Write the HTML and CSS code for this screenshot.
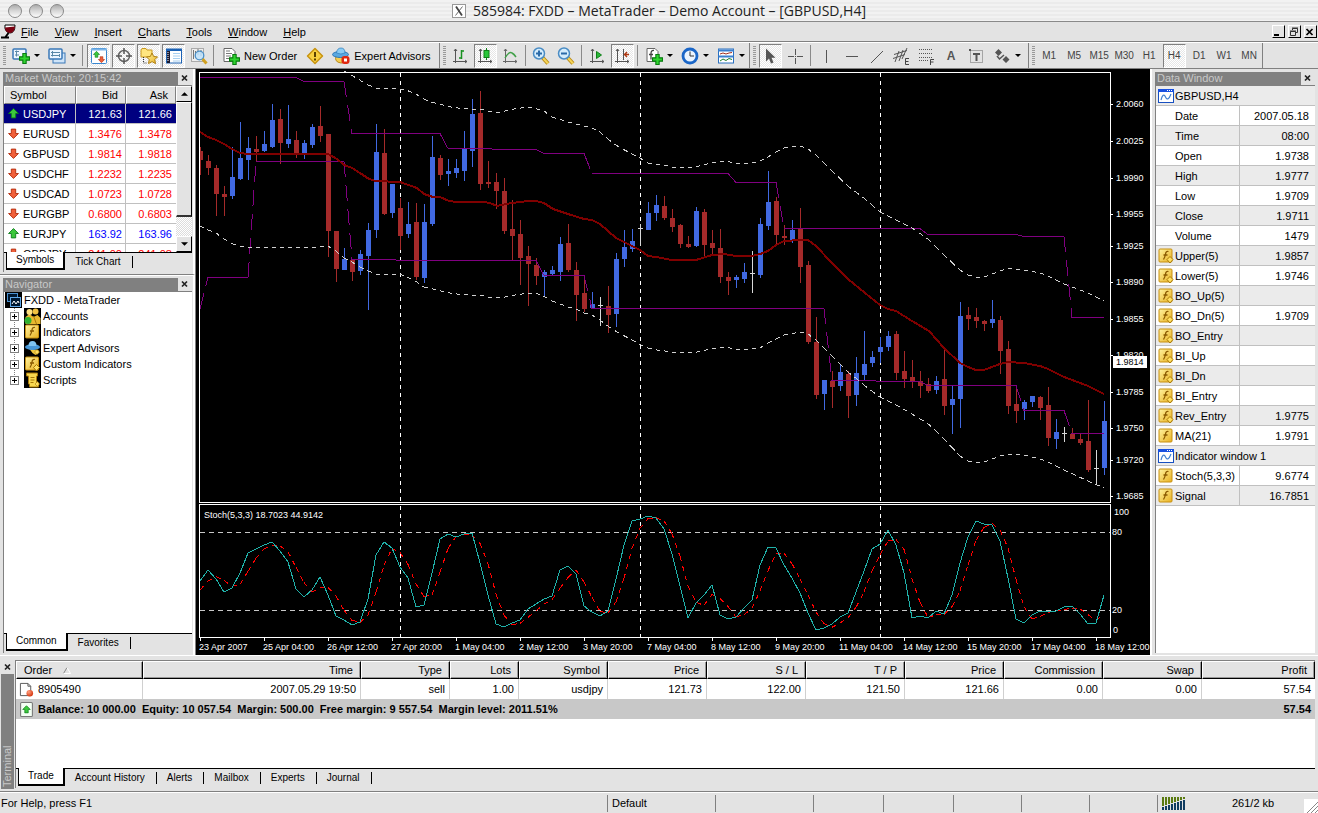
FILE: index.html
```html
<!DOCTYPE html>
<html lang="en">
<head>
<meta charset="utf-8">
<title>585984: FXDD – MetaTrader – Demo Account – [GBPUSD,H4]</title>
<link rel="stylesheet" href="styles.css">
</head>
<body>
<svg class="defs" aria-hidden="true">
  <defs>
    <linearGradient id="gold" x1="0" y1="0" x2="1" y2="1"><stop offset="0" stop-color="#fff3a0"/><stop offset="1" stop-color="#e8b020"/></linearGradient>
    <linearGradient id="knob" x1="0" y1="0" x2="0" y2="1"><stop offset="0" stop-color="#a8a8a8"/><stop offset=".5" stop-color="#d8d8d8"/><stop offset="1" stop-color="#fff"/></linearGradient>
    <radialGradient id="redball" cx=".35" cy=".3" r=".8"><stop offset="0" stop-color="#ffa080"/><stop offset="1" stop-color="#d02800"/></radialGradient>
  </defs>
  <symbol id="plus" viewBox="0 0 10 10"><path d="M3.500 .5h3v3h3v3h-3v3h-3v-3h-3v-3h3z" fill="#2fd52f" stroke="#087a10"/></symbol>
  <symbol id="up" viewBox="0 0 10 10"><path d="M5 .5L9.500 5H7v4H3V5H.5z" fill="#3cc83c" stroke="#0a7a1a" stroke-width=".8"/></symbol>
  <symbol id="down" viewBox="0 0 10 10"><path d="M5 9.500L.5 5H3V1h4v4h2.500z" fill="#f0603a" stroke="#b02808" stroke-width=".8"/></symbol>
  <symbol id="newchart" viewBox="0 0 18 18"><rect x="1" y="2" width="13" height="10" rx="1" fill="#eef6ff" stroke="#3a78b8" stroke-width="1.500"/><path d="M3 4.500h4M4.500 3.500v6M3 8h4" stroke="#5a88a8" fill="none"/><use href="#plus" x="7" y="6" width="11" height="11"/></symbol>
  <symbol id="profiles" viewBox="0 0 18 18"><rect x="5" y="6" width="12" height="10" fill="#cfe4f8" stroke="#3a78b8"/><rect x="1" y="2" width="13" height="10" rx="1" fill="#eef6ff" stroke="#3a78b8" stroke-width="1.500"/><path d="M3 5.500h9M4.500 4v5.500M3 8.500h8M11.500 7v3" stroke="#5a88a8" fill="none"/></symbol>
  <symbol id="market" viewBox="0 0 18 18"><rect x="1.500" y="1.500" width="15" height="15" rx="1" fill="#fff" stroke="#3a88d0"/><path d="M1 2.500h16" stroke="#7ab4e8" stroke-width="2"/><use href="#up" x="3" y="4" width="7" height="7"/><use href="#down" x="8" y="9" width="7" height="7"/></symbol>
  <symbol id="target" viewBox="0 0 18 18"><circle cx="9" cy="9" r="5.500" fill="none" stroke="#666" stroke-width="1.500"/><path d="M9 1v6M9 11v6M1 9h6M11 9h6" stroke="#555" stroke-width="1.500"/></symbol>
  <symbol id="folderstar" viewBox="0 0 18 18"><path d="M1 3l1-1.500h4L7 3h5v7H1z" fill="#ffe680" stroke="#c89820"/><path d="M3.500 10v6h4" stroke="#333" stroke-dasharray="1 1" fill="none"/><path d="M12 6l1.700 3.500 3.800.4-2.700 2.700.7 4-3.500-2-3.500 2 .7-4L6.500 9.900l3.800-.4z" fill="url(#gold)" stroke="#b08010"/></symbol>
  <symbol id="terminalicon" viewBox="0 0 18 18"><rect x="1.500" y="2" width="15" height="14" fill="#fff" stroke="#1c62b4"/><path d="M1 3h16" stroke="#1c62b4" stroke-width="2"/><path d="M3.500 4v12" stroke="#1a1a30" stroke-width="3"/><path d="M8 6.500h7M8 9h7M8 11.500h7M8 14h7" stroke="#a8d0f0"/><path d="M3 5v10" stroke="#fff" stroke-dasharray="1 1"/></symbol>
  <symbol id="tester" viewBox="0 0 18 18"><rect x="1.500" y="1.500" width="12" height="13" fill="#eee" stroke="#aaa"/><path d="M3.500 3v9M5.500 4v6M8 2v6M11 3v6" stroke="#777"/><circle cx="9.500" cy="8.500" r="4.300" fill="#bfe2fa" fill-opacity=".85" stroke="#4a90c8" stroke-width="1.300"/><path d="M12.500 12l4 4.500" stroke="#d0a020" stroke-width="3"/></symbol>
  <symbol id="neworder" viewBox="0 0 18 18"><path d="M2 1.500h8l3 3v10H2z" fill="#fff" stroke="#666"/><path d="M4 4h4M4 6.500h6M4 9h5M4 11.500h3" stroke="#777"/><use href="#plus" x="7" y="7" width="11" height="11"/></symbol>
  <symbol id="warn" viewBox="0 0 18 18"><path d="M9 1.500L16.500 9 9 16.500 1.500 9z" fill="#f8d040" stroke="#c89410" stroke-width="1.500" stroke-linejoin="round"/><path d="M9 5v5M9 11.500v2" stroke="#5a4000" stroke-width="2"/></symbol>
  <symbol id="expert" viewBox="0 0 18 18"><path d="M4 9q-2 6 5 7 5 0 6-6z" fill="#f4cc50" stroke="#b88a18"/><ellipse cx="8.500" cy="7.500" rx="8" ry="3" fill="#5aa8e0" stroke="#2a78b8"/><path d="M4.500 6Q5 1 9 1t4 5q-4 2-8.500 0z" fill="#8accf4" stroke="#2a78b8" stroke-width=".7"/><rect x="9.500" y="9" width="8" height="8" rx="3" fill="#e02810"/><rect x="12" y="11.500" width="3" height="3" fill="#fff"/></symbol>
  <symbol id="bars" viewBox="0 0 18 18"><path d="M4.500 2v14M2 14.500h14M3 4l1.500-2L6 4M14 13l2 1.500-2 1.500" stroke="#555" fill="none"/><path d="M10.500 3v9M10.500 4h2.500M8 11h2.500" stroke="#189020" stroke-width="1.500"/></symbol>
  <symbol id="candles" viewBox="0 0 18 18"><path d="M4.500 2v14M2 14.500h14M3 4l1.500-2L6 4M14 13l2 1.500-2 1.500" stroke="#555" fill="none"/><path d="M10.500 1v12" stroke="#108018"/><rect x="8" y="3.500" width="5" height="7" fill="#28c838" stroke="#108018"/></symbol>
  <symbol id="linechart" viewBox="0 0 18 18"><path d="M4.500 2v14M2 14.500h14M3 4l1.500-2L6 4M14 13l2 1.500-2 1.500" stroke="#666" fill="none"/><path d="M4 11q4-7 7-5 2 1 4 4" stroke="#40a048" stroke-width="1.500" fill="none"/></symbol>
  <symbol id="lens" viewBox="0 0 18 18"><path d="M10.500 10.500l5.500 6" stroke="#b88a18" stroke-width="4"/><path d="M11 11l5 5.500" stroke="#f4d458" stroke-width="2"/><circle cx="7" cy="6.500" r="5.500" fill="#d4ecfc" stroke="#4a8cc4" stroke-width="1.500"/></symbol>
  <symbol id="zoomin" viewBox="0 0 18 18"><use href="#lens"/><path d="M4 6.500h6M7 3.500v6" stroke="#2a6aa8" stroke-width="2"/></symbol>
  <symbol id="zoomout" viewBox="0 0 18 18"><use href="#lens"/><path d="M4 6.500h6" stroke="#2a6aa8" stroke-width="2"/></symbol>
  <symbol id="autoscroll" viewBox="0 0 18 18"><path d="M4.500 2v14M2 14.500h14M3 4l1.500-2L6 4M14 13l2 1.500-2 1.500" stroke="#555" fill="none"/><path d="M8.500 4.500v7l5-3.500z" fill="#28b838" stroke="#108018"/></symbol>
  <symbol id="shift" viewBox="0 0 18 18"><path d="M4.500 2v14M2 14.500h14M3 4l1.500-2L6 4M14 13l2 1.500-2 1.500M10.500 2v11" stroke="#555" fill="none"/><path d="M16 7.500h-4M14 5l-2.500 2.500L14 10" stroke="#b03810" stroke-width="1.300" fill="none"/></symbol>
  <symbol id="indicator" viewBox="0 0 18 18"><path d="M2 1.500h8l3 3v10H2z" fill="#fff" stroke="#666"/><path d="M9 3.500q-3-.5-3 3v6M4 7.500h4" stroke="#444" fill="none" stroke-width="1.300"/><use href="#plus" x="7" y="7" width="11" height="11"/></symbol>
  <symbol id="clock" viewBox="0 0 18 18"><circle cx="9" cy="9" r="7" fill="#eaf4ff" stroke="#1a66c8" stroke-width="2.800"/><path d="M9 4.500V9h4" stroke="#333" fill="none"/></symbol>
  <symbol id="template" viewBox="0 0 18 18"><rect x="1.500" y="2" width="15" height="14" fill="#fff" stroke="#2a70c0"/><path d="M1 3.500h16M1.500 9.500h15" stroke="#3a80d0" stroke-width="2"/><path d="M3 7l3-1 3 1 3-1 3-.5" stroke="#a03020" fill="none"/><path d="M3 14l3-2 3 1.500 3-2 3 1" stroke="#208030" fill="none"/></symbol>
  <symbol id="cursor" viewBox="0 0 18 18"><path d="M5 1.500v13l3-3 2 5 2.500-1-2-4.700h4z" fill="#555"/></symbol>
  <symbol id="cross" viewBox="0 0 18 18"><path d="M9.500 2v6M9.500 11v6M2 9.500h6M11 9.500h6" stroke="#555"/><path d="M9.500 9v1" stroke="#555"/></symbol>
  <symbol id="vline" viewBox="0 0 18 18"><path d="M9.500 3v13" stroke="#555"/></symbol>
  <symbol id="hline" viewBox="0 0 18 18"><path d="M4 9.500h12" stroke="#555"/></symbol>
  <symbol id="trend" viewBox="0 0 18 18"><path d="M4 16L16 4" stroke="#555"/></symbol>
  <symbol id="channel" viewBox="0 0 18 18"><path d="M2 7.500l13-4M1 11.500l12-4M3 15l4-11M7 14l4-11M10 12l5-11" stroke="#555" fill="none"/><path d="M17 11.500h-3.500v6H17M13.500 14.500h3" stroke="#444" fill="none"/></symbol>
  <symbol id="fibo" viewBox="0 0 18 18"><path d="M2 2.500h14M2 6.500h14M2 10.500h14M2 13.500h9" stroke="#555" stroke-dasharray="1 1"/><path d="M17 12.500h-3.500V18M13.500 15h3" stroke="#444" fill="none"/></symbol>
  <symbol id="labelbox" viewBox="0 0 18 18"><rect x="3.500" y="3.500" width="12" height="12" fill="none" stroke="#666" stroke-dasharray="1 1"/><path d="M6 7h7M9.500 7v7" stroke="#555" stroke-width="2" fill="none"/><path d="M2 2h2v2H2z" fill="#555"/></symbol>
  <symbol id="arrows" viewBox="0 0 18 18"><path d="M2 5.500L5.500 2 9 5.500 5.500 9zM9.500 12.500L13 9l3.500 3.500L13 16z" fill="#555"/><path d="M4 9l2.500 3L11 8" stroke="#555" stroke-width="1.500" fill="none"/></symbol>
  <symbol id="glass" viewBox="0 0 16 18"><path d="M5 2h10q0 8-5 8Q4 9 5 2z" fill="#fff" stroke="#000"/><path d="M5 4.500l10-1q-.5 6.500-5 6.500-5-.5-5-5.500z" fill="#7c0010"/><path d="M8.500 10L5.500 14M1 14.500h8" stroke="#000" stroke-width="2"/></symbol>
  <symbol id="ind" viewBox="0 0 16 16"><rect x="1" y="1" width="13" height="13" rx="1" fill="url(#gold)" stroke="#c89010"/><path d="M10.500 3.500q-2.500-.8-3 2.500t-2 5.500M5.500 7h4" stroke="#8a5a00" stroke-width="1.300" fill="none"/></symbol>
  <symbol id="cind" viewBox="0 0 16 16"><use href="#ind"/><path d="M12 8.500l3 3-3 3.500-3-3.500z" fill="#ffe060" stroke="#a87808"/></symbol>
  <symbol id="win" viewBox="0 0 16 14"><rect x=".5" y=".5" width="15" height="13" fill="#fff" stroke="#1850c0"/><path d="M0 1.500h16" stroke="#1850e0" stroke-width="3"/><path d="M9 1.500h1M11 1.500h1M13 1.500h1" stroke="#fff"/><path d="M3 11Q5 3 7.500 8T13 5" stroke="#4080d0" fill="none" stroke-width="1.200"/></symbol>
  <symbol id="box" viewBox="0 0 9 9"><rect x=".5" y=".5" width="8" height="8" fill="#fff" stroke="#808080"/><path d="M2 4.500h5M4.500 2v5" stroke="#000"/></symbol>
  <symbol id="people" viewBox="0 0 16 16"><path d="M1 16V9l4-3 4 3 4-2 3 3v6z" fill="#e8b830"/><circle cx="5" cy="4" r="3" fill="#ffe080"/><circle cx="11" cy="3.500" r="3" fill="#f0c040"/><circle cx="3.500" cy="12.500" r="3.500" fill="#30b030"/><path d="M9 8l3 8" stroke="#a87808"/></symbol>
  <symbol id="hat" viewBox="0 0 16 16"><path d="M5 9l9 1v3l-3 2-3-2z" fill="#f0c840"/><ellipse cx="8" cy="7" rx="7.500" ry="3" fill="#4898d8"/><path d="M4 6q0-5 4-5t4 5z" fill="#80c4f0"/><path d="M12.500 9.500L15 12l-2.500 2.500L10 12z" fill="#ffe060" stroke="#a87808" stroke-width=".6"/></symbol>
  <symbol id="scroll" viewBox="0 0 16 16"><path d="M2 1h11v3h-1v8h2v3H5v-3H4V4H2z" fill="#f8d850" stroke="#a87808"/><path d="M6 5.500h4M6 8h4M6 10.500h3" stroke="#a87808"/><path d="M13 9.500l2 2.500-2 2.500-2.500-2.500z" fill="#ffe060" stroke="#a87808" stroke-width=".6"/></symbol>
  <symbol id="root" viewBox="0 0 17 16"><path d="M0 0h17v16H0z" fill="#000"/><rect x="2.500" y="1.500" width="10" height="8" fill="#001830" stroke="#4a90d0"/><rect x="5.500" y="5.500" width="10" height="9" fill="#001830" stroke="#60a8e8"/><path d="M7 12l2-3 2 3 2-3 1 2" stroke="#fff" fill="none"/></symbol>
  <symbol id="order" viewBox="0 0 16 16"><path d="M1.500 1.500h8l3 3v10h-11z" fill="#fff" stroke="#555"/><path d="M9.500 1.500v3h3" stroke="#555" fill="none"/><circle cx="11.500" cy="12" r="3.500" fill="url(#redball)"/></symbol>
  <symbol id="balance" viewBox="0 0 14 14"><rect x="1.500" y=".5" width="11" height="13" rx="1" fill="#f4fff4" stroke="#777"/><use href="#up" x="3" y="3" width="8" height="8"/></symbol>
  <symbol id="close" viewBox="0 0 8 8"><path d="M1 1.500l5 5M6 1.500l-5 5" stroke="#222" stroke-width="1.700"/></symbol>
</svg>

<header class="titlebar">
  <svg class="lights" viewBox="0 0 70 20" aria-hidden="true"><g fill="url(#knob)" stroke="#8a8a8a"><circle cx="15" cy="10" r="6.500"/><circle cx="36" cy="10" r="6.500"/><circle cx="57" cy="10" r="6.500"/></g></svg>
  <h1 class="title"><svg class="x11" viewBox="0 0 14 14" aria-hidden="true"><rect x=".5" y=".5" width="13" height="13" fill="#fff" stroke="#999"/><path d="M4 2.500l6 9" stroke="#444" stroke-width="1.800"/><path d="M10.500 2.500L3.500 11.500" stroke="#444" stroke-width=".8"/></svg>585984: FXDD – MetaTrader – Demo Account – [GBPUSD,H4]</h1>
</header>

<nav class="menubar" aria-label="Main menu">
  <svg class="glass" aria-hidden="true"><use href="#glass"/></svg>
  <button><u>F</u>ile</button><button><u>V</u>iew</button><button><u>I</u>nsert</button><button><u>C</u>harts</button><button><u>T</u>ools</button><button><u>W</u>indow</button><button><u>H</u>elp</button>
  <div class="winbtns">
    <button aria-label="Minimize"><svg viewBox="0 0 10 10"><path d="M1 8h5" stroke="#000" stroke-width="2"/></svg></button>
    <button aria-label="Restore"><svg viewBox="0 0 10 10"><path d="M3.500 3V1.500h5v4H7M1.500 4.500h5v4h-5zM1 4h6M3 1h6" fill="none" stroke="#333"/></svg></button>
    <button aria-label="Close"><svg viewBox="0 0 10 10"><path d="M1.500 2l6 6M7.500 2l-6 6" stroke="#000" stroke-width="1.700"/></svg></button>
  </div>
</nav>

<div class="toolbar" role="toolbar" aria-label="Tools">
  <div class="group spaced">
    <span class="grip"></span>
    <button class="drop" aria-label="New chart"><svg><use href="#newchart"/></svg></button>
    <button class="drop" aria-label="Profiles"><svg><use href="#profiles"/></svg></button>
    <span class="sep"></span>
    <button class="on" aria-label="Market Watch"><svg><use href="#market"/></svg></button>
    <button class="on" aria-label="Data Window"><svg><use href="#target"/></svg></button>
    <button class="on" aria-label="Navigator"><svg><use href="#folderstar"/></svg></button>
    <button class="on" aria-label="Terminal"><svg><use href="#terminalicon"/></svg></button>
    <button aria-label="Strategy Tester"><svg><use href="#tester"/></svg></button>
    <span class="sep"></span>
    <button class="wide"><svg><use href="#neworder"/></svg>New Order</button>
    <button aria-label="MetaEditor"><svg><use href="#warn"/></svg></button>
    <button class="wide"><svg><use href="#expert"/></svg>Expert Advisors</button>
  </div>
  <div class="group">
    <span class="grip"></span>
    <button aria-label="Bar chart"><svg><use href="#bars"/></svg></button>
    <button class="on" aria-label="Candlesticks"><svg><use href="#candles"/></svg></button>
    <button aria-label="Line chart"><svg><use href="#linechart"/></svg></button>
    <span class="sep"></span>
    <button aria-label="Zoom in"><svg><use href="#zoomin"/></svg></button>
    <button aria-label="Zoom out"><svg><use href="#zoomout"/></svg></button>
    <span class="sep"></span>
    <button aria-label="Auto scroll"><svg><use href="#autoscroll"/></svg></button>
    <button class="on" aria-label="Chart shift"><svg><use href="#shift"/></svg></button>
    <span class="sep"></span>
    <button class="drop" aria-label="Indicators"><svg><use href="#indicator"/></svg></button>
    <button class="drop" aria-label="Periods"><svg><use href="#clock"/></svg></button>
    <button class="drop" aria-label="Templates"><svg><use href="#template"/></svg></button>
  </div>
  <div class="group spaced">
    <span class="grip"></span>
    <button class="on" aria-label="Cursor"><svg><use href="#cursor"/></svg></button>
    <button aria-label="Crosshair"><svg><use href="#cross"/></svg></button>
    <span class="sep"></span>
    <button aria-label="Vertical line"><svg><use href="#vline"/></svg></button>
    <button aria-label="Horizontal line"><svg><use href="#hline"/></svg></button>
    <button aria-label="Trendline"><svg><use href="#trend"/></svg></button>
    <button aria-label="Channel"><svg><use href="#channel"/></svg></button>
    <button aria-label="Fibonacci"><svg><use href="#fibo"/></svg></button>
    <button class="letter">A</button>
    <button aria-label="Text label"><svg><use href="#labelbox"/></svg></button>
    <button class="drop" aria-label="Arrows"><svg><use href="#arrows"/></svg></button>
  </div>
  <div class="group periods">
    <span class="grip"></span>
    <button>M1</button><button>M5</button><button>M15</button><button>M30</button><button>H1</button><button class="on">H4</button><button>D1</button><button>W1</button><button>MN</button>
  </div>
</div>

<main class="workspace">
  <div class="left">
    <section class="panel market">
      <div class="caption"><h2>Market Watch: 20:15:42</h2><button class="x" aria-label="Close Market Watch"><svg><use href="#close"/></svg></button></div>
      <div class="body">
        <div class="list">
          <table class="quotes">
            <colgroup><col class="c-sym"><col><col></colgroup>
            <thead><tr><th>Symbol</th><th>Bid</th><th>Ask</th></tr></thead>
            <tbody>
              <tr class="sel"><td><svg><use href="#up"/></svg>USDJPY</td><td>121.63</td><td>121.66</td></tr>
              <tr class="dn"><td><svg><use href="#down"/></svg>EURUSD</td><td>1.3476</td><td>1.3478</td></tr>
              <tr class="dn"><td><svg><use href="#down"/></svg>GBPUSD</td><td>1.9814</td><td>1.9818</td></tr>
              <tr class="dn"><td><svg><use href="#down"/></svg>USDCHF</td><td>1.2232</td><td>1.2235</td></tr>
              <tr class="dn"><td><svg><use href="#down"/></svg>USDCAD</td><td>1.0723</td><td>1.0728</td></tr>
              <tr class="dn"><td><svg><use href="#down"/></svg>EURGBP</td><td>0.6800</td><td>0.6803</td></tr>
              <tr class="up"><td><svg><use href="#up"/></svg>EURJPY</td><td>163.92</td><td>163.96</td></tr>
              <tr class="dn"><td><svg><use href="#down"/></svg>GBPJPY</td><td>241.00</td><td>241.08</td></tr>
            </tbody>
          </table>
          <div class="scroll">
            <button aria-label="Scroll up"><svg viewBox="0 0 8 4"><path d="M0 4l4-4 4 4z"/></svg></button>
            <span class="thumb"></span><span class="track"></span>
            <button aria-label="Scroll down"><svg viewBox="0 0 8 4"><path d="M0 0h8L4 4z"/></svg></button>
          </div>
        </div>
        <div class="tabs"><button class="active">Symbols</button><button>Tick Chart</button></div>
      </div>
    </section>
    <section class="panel navigator">
      <div class="caption"><h2>Navigator</h2><button class="x" aria-label="Close Navigator"><svg><use href="#close"/></svg></button></div>
      <div class="body">
        <div class="tree">
          <div class="rootrow"><svg><use href="#root"/></svg>FXDD - MetaTrader</div>
          <ul>
            <li><svg class="exp"><use href="#box"/></svg><svg class="ico"><use href="#people"/></svg>Accounts</li>
            <li><svg class="exp"><use href="#box"/></svg><svg class="ico"><use href="#ind"/></svg>Indicators</li>
            <li><svg class="exp"><use href="#box"/></svg><svg class="ico"><use href="#hat"/></svg>Expert Advisors</li>
            <li><svg class="exp"><use href="#box"/></svg><svg class="ico"><use href="#cind"/></svg>Custom Indicators</li>
            <li><svg class="exp"><use href="#box"/></svg><svg class="ico"><use href="#scroll"/></svg>Scripts</li>
          </ul>
        </div>
        <div class="tabs"><button class="active">Common</button><button>Favorites</button></div>
      </div>
    </section>
  </div>

  <div class="chartpane">
    <svg id="chart" viewBox="196 69 954 586" role="img" aria-label="GBPUSD H4 chart with stochastic oscillator"></svg>
  </div>

  <section class="panel datawin">
    <div class="caption"><h2>Data Window</h2><button class="x" aria-label="Close Data Window"><svg><use href="#close"/></svg></button></div>
    <div class="body">
      <table class="values">
        <tbody>
          <tr class="head"><th colspan="2"><svg class="w"><use href="#win"/></svg>GBPUSD,H4</th></tr>
          <tr><th>Date</th><td>2007.05.18</td></tr>
          <tr><th>Time</th><td>08:00</td></tr>
          <tr><th>Open</th><td>1.9738</td></tr>
          <tr><th>High</th><td>1.9777</td></tr>
          <tr><th>Low</th><td>1.9709</td></tr>
          <tr><th>Close</th><td>1.9711</td></tr>
          <tr><th>Volume</th><td>1479</td></tr>
          <tr><th><svg><use href="#cind"/></svg>Upper(5)</th><td>1.9857</td></tr>
          <tr><th><svg><use href="#cind"/></svg>Lower(5)</th><td>1.9746</td></tr>
          <tr><th><svg><use href="#cind"/></svg>BO_Up(5)</th><td></td></tr>
          <tr><th><svg><use href="#cind"/></svg>BO_Dn(5)</th><td>1.9709</td></tr>
          <tr><th><svg><use href="#cind"/></svg>BO_Entry</th><td></td></tr>
          <tr><th><svg><use href="#cind"/></svg>BI_Up</th><td></td></tr>
          <tr><th><svg><use href="#cind"/></svg>BI_Dn</th><td></td></tr>
          <tr><th><svg><use href="#cind"/></svg>BI_Entry</th><td></td></tr>
          <tr><th><svg><use href="#cind"/></svg>Rev_Entry</th><td>1.9775</td></tr>
          <tr><th><svg><use href="#ind"/></svg>MA(21)</th><td>1.9791</td></tr>
          <tr class="head"><th colspan="2"><svg class="w"><use href="#win"/></svg>Indicator window 1</th></tr>
          <tr><th><svg><use href="#ind"/></svg>Stoch(5,3,3)</th><td>9.6774</td></tr>
          <tr><th><svg><use href="#ind"/></svg>Signal</th><td>16.7851</td></tr>
        </tbody>
      </table>
    </div>
  </section>
</main>

<section class="terminal">
  <div class="side"><button class="x" aria-label="Close Terminal"><svg><use href="#close"/></svg></button><h2>Terminal</h2></div>
  <div class="body">
    <div class="orders-wrap">
    <table class="orders">
      <colgroup><col class="w127"><col class="w218"><col class="w89"><col class="w69"><col class="w89"><col class="w99"><col class="w99"><col class="w99"><col class="w99"><col class="w99"><col class="w99"><col></colgroup>
      <thead><tr><th>Order <svg class="sort" viewBox="0 0 8 7"><path d="M.5 6.500L4 .5" stroke="#888" fill="none"/><path d="M4 .5l3.500 6h-7" stroke="#fff" fill="none"/></svg></th><th>Time</th><th>Type</th><th>Lots</th><th>Symbol</th><th>Price</th><th>S / L</th><th>T / P</th><th>Price</th><th>Commission</th><th>Swap</th><th>Profit</th></tr></thead>
      <tbody>
        <tr><td><svg><use href="#order"/></svg>8905490</td><td>2007.05.29 19:50</td><td>sell</td><td>1.00</td><td>usdjpy</td><td>121.73</td><td>122.00</td><td>121.50</td><td>121.66</td><td>0.00</td><td>0.00</td><td>57.54</td></tr>
        <tr class="sum"><td colspan="11"><svg><use href="#balance"/></svg>Balance: 10 000.00&nbsp; Equity: 10 057.54&nbsp; Margin: 500.00&nbsp; Free margin: 9 557.54&nbsp; Margin level: 2011.51%</td><td>57.54</td></tr>
      </tbody>
    </table>
    </div>
    <div class="tabs"><button class="active">Trade</button><button>Account History</button><button>Alerts</button><button>Mailbox</button><button>Experts</button><button>Journal</button></div>
  </div>
</section>

<footer class="status">
  <span class="help">For Help, press F1</span>
  <span class="s108">Default</span><span class="s98"></span><span class="s70"></span><span class="s70"></span><span class="s68"></span><span class="s68"></span><span class="s68"></span>
  <span class="net"><svg id="signal" viewBox="0 0 24 13" aria-hidden="true"><path d="M1 0v9M4 0v8M7 0v7M10 0v6M13 0v5M16 0v4M19 0v3M22 0v2" stroke="#5a7a10" stroke-width="2"/><path d="M1 10v3M4 9v4M7 8v5M10 7v6M13 6v7M16 5v8M19 4v9M22 3v10" stroke="#103c60" stroke-width="2"/></svg>261/2 kb</span>
  <svg class="resize" viewBox="0 0 14 14" aria-hidden="true"><path d="M0 0h14v14H0z" fill="#fff"/><path d="M3 14L14 3M7 14l7-7M11 14l3-3" stroke="#888"/></svg>
</footer>
<script src="chart.js"></script>
</body>
</html>
```

FILE: styles.css
```css
* { box-sizing: border-box; }
html, body { height: 100%; }
body {
  margin: 0;
  display: flex;
  flex-direction: column;
  background: #e3e3e3;
  color: #000;
  font: 11px/14px "Liberation Sans", Arial, sans-serif;
  overflow: hidden;
}
button {
  font: inherit;
  color: inherit;
  background: none;
  border: 0;
  padding: 0;
  margin: 0;
}
h1, h2 { margin: 0; font-weight: normal; }
svg { display: block; flex: none; }
table { border-collapse: separate; border-spacing: 0; }
.defs { position: absolute; width: 0; height: 0; }

.titlebar {
  display: grid;
  grid-template-columns: 70px 1fr 70px;
  align-items: center;
  height: 22px;
  border-bottom: 1px solid #8a8a8a;
  background: repeating-linear-gradient(#f2f2f2 0 2px, #ebebeb 2px 4px);
}
.lights { width: 70px; height: 20px; }
.title {
  display: flex;
  justify-content: center;
  align-items: center;
  gap: 7px;
  font: 14px/20px "Open Sans", "Noto Sans", sans-serif;
  color: #222;
  white-space: nowrap;
}
.x11 { width: 14px; height: 14px; }

.menubar {
  display: flex;
  align-items: center;
  height: 20px;
  border-bottom: 1px solid #808080;
}
.menubar > button { padding: 0 8px; }
.glass { width: 16px; height: 18px; margin-right: -3px; }
.winbtns { display: flex; gap: 3px; margin-left: auto; padding-right: 1px; }
.winbtns button {
  width: 13px;
  height: 13px;
  border: 1px solid #fff;
  border-right-color: #000;
  border-bottom-color: #000;
}
.winbtns svg { width: 10px; height: 10px; }

.toolbar {
  display: flex;
  gap: 1px;
  height: 27px;
  padding: 0 1px;
  border-top: 1px solid #fff;
  border-bottom: 1px solid #808080;
}
.group {
  display: flex;
  align-items: center;
  border-right: 1px solid #808080;
}
.group.spaced { padding-right: 3px; }
.grip {
  width: 3px;
  height: 20px;
  margin: 0 2px;
  background: repeating-linear-gradient(#999 0 1px, transparent 1px 2px);
}
.sep {
  width: 6px;
  height: 21px;
  background: linear-gradient(#8a8a8a, #8a8a8a) 2px 0 / 1px 100% no-repeat;
}
.toolbar button {
  display: flex;
  align-items: center;
  justify-content: center;
  width: 25px;
  height: 24px;
  border: 1px solid transparent;
}
.toolbar svg { width: 18px; height: 18px; }
.toolbar .on {
  width: 23px;
  margin: 0 1px;
  border-color: #808080 #fff #fff #808080;
  background: repeating-conic-gradient(#fff 0 25%, #e6e6e6 0 50%) 0 0 / 2px 2px;
}
.toolbar .drop { width: 36px; gap: 4px; }
.drop::after {
  content: "";
  border: 3px solid transparent;
  border-top-color: #000;
  border-bottom-width: 0;
}
.toolbar .wide { width: auto; padding: 0 4px; gap: 4px; white-space: nowrap; }
.toolbar .letter { color: #555; font-weight: bold; font-size: 12px; }
.periods { font-size: 10px; color: #444; }

.workspace {
  flex: 1;
  min-height: 0;
  display: grid;
  grid-template-columns: 196px 1fr 168px;
}
.left { display: flex; flex-direction: column; border-right: 1px solid #808080; }
.panel { display: flex; flex-direction: column; min-height: 0; padding: 2px 3px 2px 3px; }
.left .panel { border-right: 2px solid #fff; padding-right: 1px; }
.market { height: 206px; border-bottom: 1px solid #808080; }
.navigator { flex: 1; border-top: 1px solid #fff; padding-top: 1px; }
.caption { display: flex; align-items: center; height: 14px; }
.caption h2 {
  flex: 1;
  padding-left: 2px;
  font-size: 11px;
  line-height: 13px;
  background: #808080;
  color: #c8c8c8;
}
.x { display: flex; align-items: center; justify-content: center; width: 14px; height: 13px; }
.x svg { width: 8px; height: 8px; }
.panel > .body {
  flex: 1;
  min-height: 0;
  display: flex;
  flex-direction: column;
  border-top: 1px solid #808080;
  border-left: 1px solid #808080;
}
.list { flex: 1; min-height: 0; display: flex; overflow: hidden; background: #fff; }
.quotes { flex: 1; table-layout: fixed; align-self: flex-start; }
.c-sym { width: 72px; }
th, td { padding: 0; font-weight: normal; white-space: nowrap; }
.quotes th {
  height: 17px;
  line-height: 16px;
  padding: 0 7px 0 5px;
  text-align: right;
  background: #e3e3e3;
  border: 1px solid #fff;
  border-right-color: #808080;
  border-bottom-color: #808080;
}
.quotes th:first-child, .quotes td:first-child { text-align: left; }
.quotes td {
  height: 20px;
  padding: 0 3px 0 4px;
  text-align: right;
  border-right: 1px solid #c0c0c0;
  border-bottom: 1px solid #c0c0c0;
}
.quotes td:last-child { border-right: 0; padding-right: 4px; }
.quotes td svg { display: inline-block; width: 11px; height: 11px; margin-right: 4px; vertical-align: -1px; }
.quotes .sel td { background: #000080; color: #fff; }
.quotes .dn td + td { color: #f00; }
.quotes .up td + td { color: #00f; }
.scroll { display: flex; flex-direction: column; width: 16px; }
.scroll button {
  display: flex;
  align-items: center;
  justify-content: center;
  height: 16px;
  background: #e3e3e3;
  border: 1px solid #fff;
  border-right-color: #000;
  border-bottom-color: #000;
}
.scroll button svg { width: 7px; height: 4px; }
.thumb {
  flex: 6;
  background: #e3e3e3;
  border: 1px solid #fff;
  border-right-color: #000;
  border-bottom: 2px solid #333;
}
.track { flex: 1; background: repeating-conic-gradient(#fff 0 25%, #dcdcdc 0 50%) 0 0 / 2px 2px; }

.tabs {
  display: flex;
  height: 20px;
  padding-left: 2px;
  border-top: 1px solid #000;
  background: #e3e3e3;
  font-size: 10px;
}
.tabs button { padding: 0 12px 2px 10px; position: relative; }
.tabs button:not(.active)::after {
  content: "";
  position: absolute;
  right: 0;
  top: 3px;
  height: 12px;
  border-right: 1px solid #000;
}
.tabs .active {
  height: 18px;
  margin-top: -1px;
  padding: 0 9px;
  background: #fff;
  border: solid #000;
  border-width: 0 2px 2px 1px;
}

.tree { flex: 1; background: #fff; padding: 0 1px; line-height: 16px; }
.rootrow { display: flex; gap: 2px; }
.rootrow svg { width: 17px; height: 16px; }
.tree ul {
  list-style: none;
  margin: 0 0 0 5px;
  padding: 0;
  background: repeating-linear-gradient(#808080 0 1px, #fff 1px 2px) 4px 0 / 1px 72px no-repeat;
}
.tree li { display: flex; align-items: center; gap: 2px; }
.exp { width: 9px; height: 9px; margin-right: 3px; }
.ico { width: 17px; height: 16px; background: #000; }

.chartpane { background: #000; min-width: 0; }
#chart { width: 100%; height: 100%; }
#chart text { font: 9px "Liberation Sans", Arial, sans-serif; fill: #fff; }
#chart .thin { fill: none; shape-rendering: crispEdges; }

.datawin { border-left: 2px solid #fff; }
.datawin > .body { background: #fff; }
.values { width: 100%; }
.values th, .values td { height: 20px; border-bottom: 1px solid #c0c0c0; }
.values th { text-align: left; padding-left: 19px; border-right: 1px solid #c0c0c0; }
.values td { width: 75px; text-align: right; padding-right: 6px; }
.values tr:nth-child(odd) { background: #ebebeb; }
.values .head th { border-right: 0; }
.values th svg {
  float: left;
  width: 16px;
  height: 16px;
  margin: -1px 0 -1px -17px;
}
.values th .w { height: 14px; margin: 0 0 0 -17px; }

.terminal {
  display: flex;
  height: 137px;
  border-top: 1px solid #fff;
  border-bottom: 1px solid #808080;
}
.side { display: flex; flex-direction: column; align-items: center; width: 15px; padding: 4px 1px 2px; }
.side h2 {
  flex: 1;
  width: 13px;
  margin-top: 1px;
  padding-top: 2px;
  background: #808080;
  color: #c8c8c8;
  font-size: 11px;
  line-height: 13px;
  writing-mode: vertical-rl;
  rotate: 180deg;
}
.terminal .body {
  flex: 1;
  display: flex;
  flex-direction: column;
  margin: 4px 3px 3px 0;
  border-left: 1px solid #808080;
  border-top: 1px solid #808080;
}
.orders-wrap { flex: 1; background: #fff; }
.orders { width: 100%; table-layout: fixed; }
.w127 { width: 127px; }
.w218 { width: 218px; }
.w89 { width: 89px; }
.w69 { width: 69px; }
.w99 { width: 99px; }
.orders th {
  height: 18px;
  padding: 0 7px;
  text-align: right;
  background: #e3e3e3;
  border: 1px solid #fff;
  border-right-color: #000;
  border-bottom-color: #000;
  box-shadow: inset -1px -1px #999;
}
.orders td { height: 20px; padding: 0 4px; text-align: right; border-right: 1px solid #d0d0d0; }
.orders td:last-child { border-right: 0; }
.orders th:first-child, .orders td:first-child { text-align: left; }
.orders td:first-child { padding-left: 3px; }
.orders td svg { float: left; width: 15px; height: 15px; margin-right: 4px; }
.sort { display: inline-block; width: 8px; height: 7px; margin-left: 8px; }
.orders .sum td { background: #c8c8c8; border: 0; font-weight: bold; }

.status {
  display: flex;
  align-items: center;
  height: 21px;
  border-top: 1px solid #fff;
}
.status span { height: 17px; line-height: 17px; border-left: 1px solid #808080; padding-left: 4px; }
.status .help { flex: 1; border: 0; padding-left: 1px; }
.s108 { width: 108px; }
.s98 { width: 98px; }
.s70 { width: 70px; }
.s68 { width: 68px; }
.status .net { display: flex; align-items: center; gap: 46px; width: 147px; white-space: nowrap; }
#signal { width: 24px; height: 13px; }
.resize { width: 14px; height: 14px; align-self: flex-end; }
```

FILE: chart.js
```js
const NS = 'http://www.w3.org/2000/svg';
const chart = document.getElementById('chart');

function add(tag, attrs, text) {
  const el = document.createElementNS(NS, tag);
  for (const key in attrs) el.setAttribute(key, attrs[key]);
  if (text) el.textContent = text;
  chart.appendChild(el);
}

// One bar each: colour, high, body top, body bottom, low
const bars = `R147,151,160,175 R155,161,168,175 R165,168,194,216 R186,194,197,216 B147,177,196,199 B122,158,179,180
B137,148,160,180 R136,149,152,162 B131,144,151,152 B104,120,147,148 R109,119,143,164 B105,139,144,148
R131,140,154,158 B140,143,154,159 B124,127,145,148 R106,126,136,142 R134,134,231,257 R231,231,269,282
B248,259,270,270 R259,260,272,281 B250,254,271,275 B223,230,256,310 B124,152,230,238 R129,153,214,215
B184,184,213,218 R198,208,236,250 B202,224,234,238 R203,222,277,280 B204,222,278,283 B136,157,224,226
R155,158,175,180 B159,171,174,186 B159,168,173,178 B131,148,171,181 B99,114,151,167 R91,113,184,190
R161,182,184,188 R173,182,191,209 R178,191,231,234 R200,229,236,260 R220,234,258,285 R246,256,264,306
R258,265,276,285 B270,272,277,296 B266,270,274,275 B237,244,272,281 R224,243,270,272 R262,270,295,321
R279,293,309,312 B292,304,308,309 W297,305,306,326 R286,306,315,333 B253,259,314,327 B230,247,259,267
B229,241,249,252 W224,228,229,246 B202,213,230,230 B195,205,213,221 R196,206,218,220 R209,218,227,232
R224,225,244,248 R236,244,247,248 B207,211,246,247 R209,212,245,257 R230,243,248,254 R229,248,277,283
R272,277,281,295 B275,277,280,288 B263,272,279,283 W251,273,274,293 B218,224,275,278 B171,202,226,230
R197,201,235,244 R225,236,238,245 B220,230,241,243 R208,229,267,283 R261,265,342,344 R317,342,395,399
B380,380,394,410 R371,381,387,408 B364,372,386,391 R371,374,396,418 B357,373,395,406 B331,364,375,380
B351,357,363,367 B337,347,352,363 B331,336,347,351 R331,334,373,380 R351,371,379,388 R360,377,381,388
R371,381,386,398 R378,384,391,393 B376,381,390,394 R349,379,406,415 B386,399,405,434 B302,316,399,428
R307,315,319,330 R308,317,321,328 R320,321,324,331 B300,319,323,328 R316,320,351,374 R341,349,406,414
R388,404,411,423 B400,402,409,420 B396,396,402,407 R396,397,408,420 R387,405,438,446 B419,432,439,449
W427,433,434,442 R428,434,439,439 R434,439,443,445 R400,441,470,472 W450,468,469,484 B401,421,468,475`.split(/\s+/);
const colours = { R: '#a52a2a', B: '#4169e1', W: '#d8d8d8' };

// Day separators
for (const x of [400.5, 640.5, 880.5]) {
  add('path', { d: `M${x} 73V502M${x} 506V637`, stroke: '#fff', 'stroke-dasharray': '4 4', class: 'thin' });
}

bars.forEach((bar, i) => {
  const [high, top, bottom, low] = bar.slice(1).split(',').map(Number);
  const x = 200 + 8 * i;
  const fill = colours[bar[0]];
  const left = i === 0 ? x : x - 2;
  add('rect', { x, y: high, width: 1, height: low - high, fill });
  add('rect', { x: left, y: top, width: x + 3 - left, height: bottom - top, fill });
});

function line(points, attrs) {
  add('polyline', { points, class: 'thin', ...attrs });
}

// Draws one sub-path per bar, so the dash pattern restarts at each bar
function dashed(points, stroke, dash) {
  const pts = points.split(' ').map(p => p.split(',').map(Number));
  const at = x => {
    const k = Math.max(1, pts.findIndex(p => p[0] >= x));
    const [x0, y0] = pts[k - 1];
    const [x1, y1] = pts[k];
    return y0 + (y1 - y0) * (x - x0) / (x1 - x0);
  };
  const end = pts[pts.length - 1][0];
  let d = '';
  for (let x = Math.ceil(pts[0][0] / 8) * 8; x + 8 <= end; x += 8) {
    d += `M${x} ${at(x)}L${x + 8} ${at(x + 8)}`;
  }
  add('path', { d, stroke, 'stroke-dasharray': dash, class: 'thin' });
}

// Upper(5) and Lower(5) channels
dashed('200,77.5 296,77.5 304,81.5 344,81.5 352,133.5 440,133.5 448,148.5 491,148.5 493,149.5 536,149.5 544,153.5 584,153.5 592,173.5 728,173.5 736,182.5 776,182.5 784,228.5 920,228.5 928,234.5 1016,234.5 1024,236.5 1064,236.5 1072,317.5 1104,317.5', '#800080', '16 8');
dashed('200,309 208,277.5 248,277.5 256,161.5 344,161.5 352,259.5 396,259.5 397,260.5 536,260.5 544,275.5 584,275.5 592,308.5 824,308.5 832,380.5 876,380.5 877,381.5 920,381.5 928,385.5 1016,385.5 1024,410.5 1064,410.5 1072,433.5 1104,433.5', '#800080', '16 8');

// Envelope bands
dashed('344,71 353,76 368,85 376,88 400,89 409,91 416,94 424,99 433,103 441,104 449,107 466,109 480,109 488,111 497,113 505,111 513,109 529,107 537,109 544,111 552,117 568,122 584,126 592,128 600,132 608,139 617,146 632,154 640,158 648,163 664,165 672,167 696,167 706,164 724,161 736,163 752,163 760,161 768,157 776,152 784,148 800,146 808,149 816,155 832,171 848,186 865,199 880,212 896,220 912,228 928,239 944,255 960,270 968,275 976,277 984,277 1000,271 1008,268 1024,270 1040,273 1048,276 1064,284 1088,293 1104,301', '#d0d0d0', '4 4');
dashed('200,226 208,230 216,233 224,239 234,245 240,246 256,248 268,247 320,247 328,246 336,251 344,258 352,262 360,267 368,271 376,274 384,274 400,274 409,278 417,282 424,287 433,289 449,293 465,295 481,295 488,297 498,298 506,297 514,295 530,293 537,293 545,297 552,301 568,307 576,309 584,313 592,315 600,320 609,327 617,332 632,340 641,345 650,349 672,352 692,353 706,350 724,347 736,349 752,349 760,348 768,343 784,335 800,332 808,334 816,340 832,356 848,372 857,379 865,386 880,397 896,405 912,414 930,425 944,439 960,456 968,461 976,463 984,462 1000,456 1008,454 1024,455 1040,459 1048,462 1064,470 1088,481 1104,488', '#d0d0d0', '4 4');

// Moving average
line('200,132 208,137 216,140 224,144 232,149 240,153 248,154 328,154 337,159 344,165 352,168 360,173 369,179 376,181 400,182 417,188 424,194 433,197 440,197 449,201 457,202 484,202 490,203 497,206 506,204 512,203 528,201 536,201 544,203 553,209 568,214 584,219 592,220 600,224 608,231 616,238 624,242 632,246 640,250 648,256 656,257 672,260 696,260 712,255 724,254 736,256 752,256 760,254 768,251 776,245 784,241 800,240 808,240 816,246 832,263 848,279 865,293 880,305 888,309 896,311 912,321 929,331 944,348 960,363 968,367 976,370 984,370 1000,364 1008,362 1024,363 1040,366 1048,369 1064,377 1088,386 1104,394', { stroke: '#800000', 'stroke-width': 2 });

// Stochastic; the signal is its three-bar average
const stoch = [581, 570, 579, 592, 588, 573, 553, 549, 545, 542, 551, 562, 589, 597, 590, 577, 595, 616, 620, 625, 622, 599, 555, 542, 548, 567, 578, 607, 605, 573, 539, 534, 537, 534, 533, 563, 595, 624, 627, 623, 620, 609, 604, 599, 596, 570, 566, 574, 606, 612, 616, 611, 579, 545, 521, 519, 516, 518, 529, 554, 586, 618, 603, 595, 585, 615, 619, 617, 608, 600, 565, 547, 548, 565, 578, 593, 613, 630, 628, 624, 617, 613, 592, 571, 549, 544, 530, 545, 573, 618, 616, 618, 611, 614, 595, 563, 537, 521, 524, 525, 541, 578, 619, 623, 615, 611, 611, 611, 607, 606, 614, 624, 623, 595];
const signal = stoch.map((v, i) => i === 0 ? 590 : i === 1 ? 581 : (v + stoch[i - 1] + stoch[i - 2]) / 3);
const plot = values => values.map((v, i) => `${200 + 8 * i},${v}`).join(' ');
line('200,532.5 1110,532.5', { stroke: '#c8c8c8', 'stroke-dasharray': '5 4' });
line('200,610.5 1110,610.5', { stroke: '#c8c8c8', 'stroke-dasharray': '5 4' });
dashed(plot(signal), '#f00', '5 5');
line(plot(stoch), { stroke: '#20b2aa' });

// Frames
add('path', { d: 'M199.5 72.5H1110.5V502.5H199.5zM199.5 504.5H1110.5V637.5H199.5z', stroke: '#fff', class: 'thin' });

const prices = { '2.0060': 104, '2.0025': 141, '1.9990': 178, '1.9955': 214, '1.9925': 246, '1.9890': 282, '1.9855': 319, '1.9820': 355, '1.9785': 392, '1.9750': 428, '1.9720': 460, '1.9685': 496 };
for (const p in prices) {
  add('path', { d: `M1111 ${prices[p] + 0.5}h2`, stroke: '#fff' });
  add('text', { x: 1116, y: prices[p] + 3 }, p);
}
add('rect', { x: 1113, y: 356, width: 34, height: 12, fill: '#fff' });
add('text', { x: 1116, y: 365, style: 'fill:#000' }, '1.9814');
add('text', { x: 1114, y: 515 }, '100');
add('text', { x: 1112, y: 535 }, '80');
add('text', { x: 1112, y: 613 }, '20');
add('text', { x: 1113, y: 633 }, '0');
add('text', { x: 204, y: 518 }, 'Stoch(5,3,3) 18.7023 44.9142');

['23 Apr 2007', '25 Apr 04:00', '26 Apr 12:00', '27 Apr 20:00', '1 May 04:00', '2 May 12:00', '3 May 20:00', '7 May 04:00', '8 May 12:00', '9 May 20:00', '11 May 04:00', '14 May 12:00', '15 May 20:00', '17 May 04:00', '18 May 12:00'].forEach((label, i) => {
  add('path', { d: `M${200.5 + 64 * i} 638v3`, stroke: '#fff' });
  add('text', { x: 199 + 64 * i, y: 650 }, label);
});
```
